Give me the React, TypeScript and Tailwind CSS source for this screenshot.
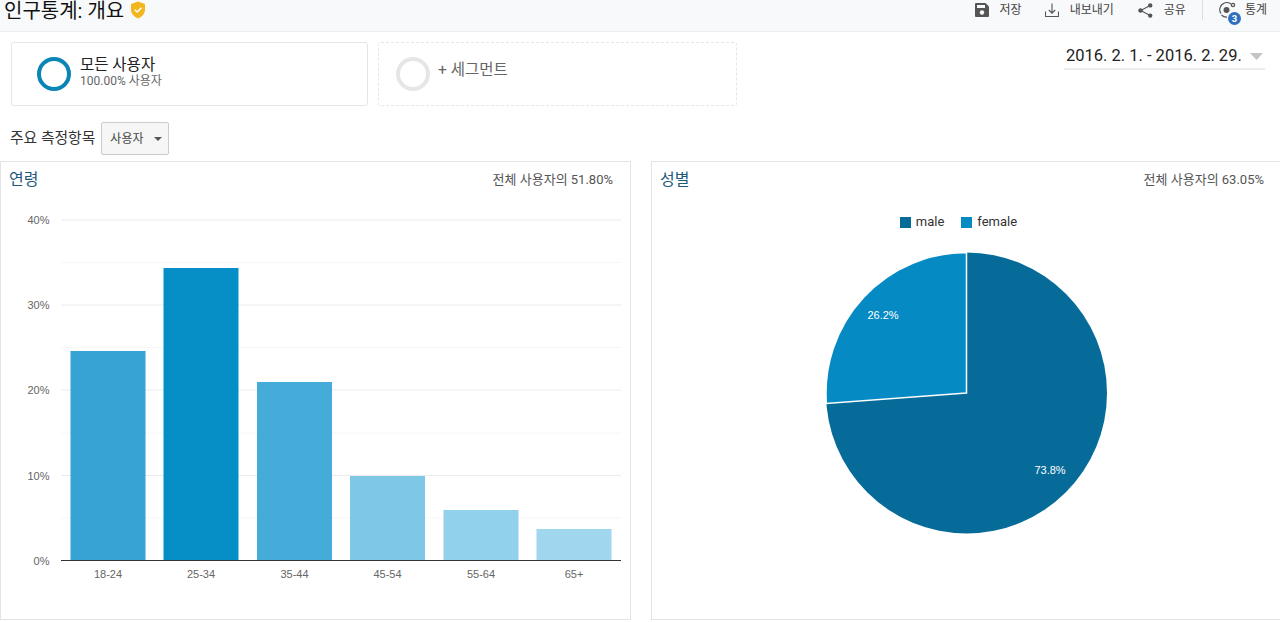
const ageBars = [
  { label: '18-24', x: 70.5, top: 351, fill: '#35a3d3' },
  { label: '25-34', x: 163.5, top: 268, fill: '#068fc7' },
  { label: '35-44', x: 257, top: 382, fill: '#45abd8' },
  { label: '45-54', x: 350, top: 476, fill: '#7fc7e7' },
  { label: '55-64', x: 443.5, top: 510, fill: '#92d1ec' },
  { label: '65+', x: 536.5, top: 529, fill: '#a0d7ef' },
];

const ticks = [
  { label: '40%', y: 220 },
  { label: '30%', y: 305 },
  { label: '20%', y: 390 },
  { label: '10%', y: 475.5 },
];

const minorTicks = [262.5, 347.5, 433, 518];

const chartFont = "'Liberation Sans', Arial, sans-serif";

const AgeChart = () => (
  <svg width="629" height="423" viewBox="1 195 629 423" className="block" fontFamily={chartFont}>
    {ticks.map((t) => (
      <g key={t.label}>
        <line x1="61" x2="621" y1={t.y} y2={t.y} stroke="#ebebeb" />
        <text x="49.5" y={t.y + 4} textAnchor="end" fontSize="11" fill="#666">{t.label}</text>
      </g>
    ))}
    {minorTicks.map((y) => (
      <line key={y} x1="61" x2="621" y1={y} y2={y} stroke="#f6f6f6" />
    ))}
    <text x="49.5" y="565" textAnchor="end" fontSize="11" fill="#666">0%</text>
    {ageBars.map((b) => (
      <g key={b.label}>
        <rect x={b.x} y={b.top} width="75" height={560 - b.top} fill={b.fill} />
        <text x={b.x + 37.5} y="578" textAnchor="middle" fontSize="11" fill="#666">{b.label}</text>
      </g>
    ))}
    <line x1="61" x2="621" y1="560.5" y2="560.5" stroke="#333" />
  </svg>
);

const GenderChart = () => (
  <svg width="628" height="308" viewBox="652 249 628 308" className="block" fontFamily={chartFont}>
    <circle cx="966.5" cy="393" r="140.5" fill="#066b99" />
    <path d="M966.5 393 L826.4 403.5 A140.5 140.5 0 0 1 966.5 252.5 Z" fill="#068ac4" stroke="#fff" strokeWidth="1.5" />
    <text x="883" y="319" textAnchor="middle" fontSize="11" fill="#fff">26.2%</text>
    <text x="1050" y="474" textAnchor="middle" fontSize="11" fill="#fff">73.8%</text>
  </svg>
);

const SaveIcon = () => (
  <svg width="14" height="14" viewBox="0 0 14 14">
    <path d="M1 0 H10.5 L14 3.5 V13 A1 1 0 0 1 13 14 H1 A1 1 0 0 1 0 13 V1 A1 1 0 0 1 1 0 Z" fill="#555" />
    <rect x="2" y="2" width="8" height="3" fill="#f8f9fa" />
    <circle cx="7" cy="9.5" r="2.2" fill="#f8f9fa" />
  </svg>
);

const ExportIcon = () => (
  <svg width="14" height="14" viewBox="0 0 14 14" fill="none" stroke="#555" strokeWidth="1.1">
    <path d="M0.5 8.5 V13.5 H13.5 V8.5" />
    <path d="M7 0.5 V10 M3.8 7 L7 10.2 L10.2 7" />
  </svg>
);

const ShareIcon = () => (
  <svg width="15" height="15" viewBox="0 0 15 15" fill="#555">
    <path d="M12 2.5 L2.8 7.5 L12 12.5" fill="none" stroke="#555" strokeWidth="1.1" />
    <circle cx="12.2" cy="2.4" r="2.2" />
    <circle cx="2.5" cy="7.5" r="2.2" />
    <circle cx="12.2" cy="12.6" r="2.2" />
  </svg>
);

const StatsIcon = () => (
  <div className="relative h-[16px] w-[19px]">
    <svg width="19" height="16" viewBox="0 0 19 16" fill="none" stroke="#555" strokeWidth="1.3">
      <path d="M3 11.5 A7 7 0 0 1 13 2" />
      <path d="M3.5 13 A7 7 0 0 0 9 15" />
      <circle cx="8.5" cy="8" r="3" fill="#555" stroke="none" />
      <circle cx="15" cy="3" r="1.6" />
    </svg>
    <span className="absolute -bottom-[7px] left-[10px] flex h-[13px] w-[13px] items-center justify-center rounded-full bg-[#2f6fc0] text-[9.5px] font-bold leading-none text-white">3</span>
  </div>
);

const App = () => {
  return (
    <div className="h-[622px] w-[1280px] overflow-hidden bg-white font-['Roboto','Noto_Sans_CJK_KR',sans-serif] text-[#333]">
      <header className="flex h-[32px] items-center justify-between border-b border-[#eceef0] bg-[#f8f9fa] pl-1 pr-[13px]">
        <div className="-mt-[9px] flex items-center gap-[6px]">
          <h1 className="text-[20px] leading-[20px] text-[#111]">인구통계: 개요</h1>
          <svg width="16" height="18" viewBox="0 0 16 18" className="-mt-[2px]">
            <path d="M8 0.5 L15 3 V8.5 C15 12.8 12 15.8 8 17.5 C4 15.8 1 12.8 1 8.5 V3 Z" fill="#f2b71f" />
            <path d="M4.8 8.8 L7.2 11 L11.4 6.8" fill="none" stroke="#fff" strokeWidth="1.5" />
          </svg>
        </div>
        <div className="-mt-[11px] flex items-center text-[12px] text-[#444]">
          <SaveIcon />
          <span className="ml-[11px]">저장</span>
          <div className="ml-[23px]"><ExportIcon /></div>
          <span className="ml-[11px]">내보내기</span>
          <div className="ml-[24px]"><ShareIcon /></div>
          <span className="ml-[11px]">공유</span>
          <div className="ml-[16px] h-[20px] w-px bg-[#ddd]" />
          <div className="ml-[15px]"><StatsIcon /></div>
          <span className="ml-[8px]">통계</span>
        </div>
      </header>

      <div className="flex h-[129px] justify-between pl-[11px] pr-[15px] pt-[10px]">
        <div>
          <div className="flex gap-[10px]">
            <div className="flex h-[64px] w-[357px] items-center rounded-[3px] border border-[#e6e6e6] pl-[25px]">
              <div className="h-[34px] w-[34px] rounded-full border-[4.5px] border-[#0b85b5]" />
              <div className="mb-[2px] ml-[9px]">
                <div className="text-[15.5px] leading-[17px] text-[#222]">모든 사용자</div>
                <div className="text-[12px] leading-[15px] text-[#666]">100.00% 사용자</div>
              </div>
            </div>
            <div className="flex h-[64px] w-[359px] items-center rounded-[3px] border border-dashed border-[#e6e6e6] pl-[17px]">
              <div className="h-[34px] w-[34px] rounded-full border-[4.5px] border-[#e6e6e6]" />
              <div className="mb-[6px] ml-[8px] text-[15.5px] text-[#666]">+ 세그먼트</div>
            </div>
          </div>
          <div className="-ml-[1px] mt-[16px] flex items-center">
            <span className="text-[14.8px] text-[#333]">주요 측정항목</span>
            <button className="ml-[6px] flex h-[33px] w-[68px] items-center justify-between rounded-[2px] border border-[#ccc] bg-[#f6f6f6] pl-[8px] pr-[6px] text-[12px] text-[#444]">
              사용자
              <svg width="8" height="4" viewBox="0 0 8 4"><path d="M0 0 H8 L4 4 Z" fill="#555" /></svg>
            </button>
          </div>
        </div>
        <div className="mt-[2px] flex h-[26px] w-[201px] items-center justify-between border-b-2 border-[#ececec] pl-[2px] text-[16.5px] text-[#222]">
          <span className="whitespace-nowrap">2016. 2. 1. - 2016. 2. 29.</span>
          <svg width="13" height="7" viewBox="0 0 13 7" className="mr-[2px]"><path d="M0 0 H13 L6.5 7 Z" fill="#c4c4c4" /></svg>
        </div>
      </div>

      <div className="flex h-[459px] justify-between">
        <section className="h-[459px] w-[631px] border border-[#e3e3e3]">
          <div className="flex h-[33px] items-start justify-between pl-[8px] pr-[17px] pt-[7px]">
            <h2 className="text-[16px] leading-[22px] text-[#1d5a7a]">연령</h2>
            <span className="mt-[1px] text-[13px] text-[#555]">전체 사용자의 51.80%</span>
          </div>
          <AgeChart />
        </section>
        <section className="h-[459px] w-[629px] border-y border-l border-[#e3e3e3]">
          <div className="flex h-[33px] items-start justify-between pl-[8px] pr-[16px] pt-[7px]">
            <h2 className="text-[16px] leading-[22px] text-[#1d5a7a]">성별</h2>
            <span className="mt-[1px] text-[13px] text-[#555]">전체 사용자의 63.05%</span>
          </div>
          <div className="flex h-[54px] items-center justify-center gap-[17px] pr-[15px] text-[13px] text-[#333]">
            <span className="flex items-center gap-[5px]"><i className="h-[11px] w-[11px] bg-[#066b99]" />male</span>
            <span className="flex items-center gap-[5px]"><i className="h-[11px] w-[11px] bg-[#068ac4]" />female</span>
          </div>
          <GenderChart />
        </section>
      </div>
    </div>
  );
};

export default App;
